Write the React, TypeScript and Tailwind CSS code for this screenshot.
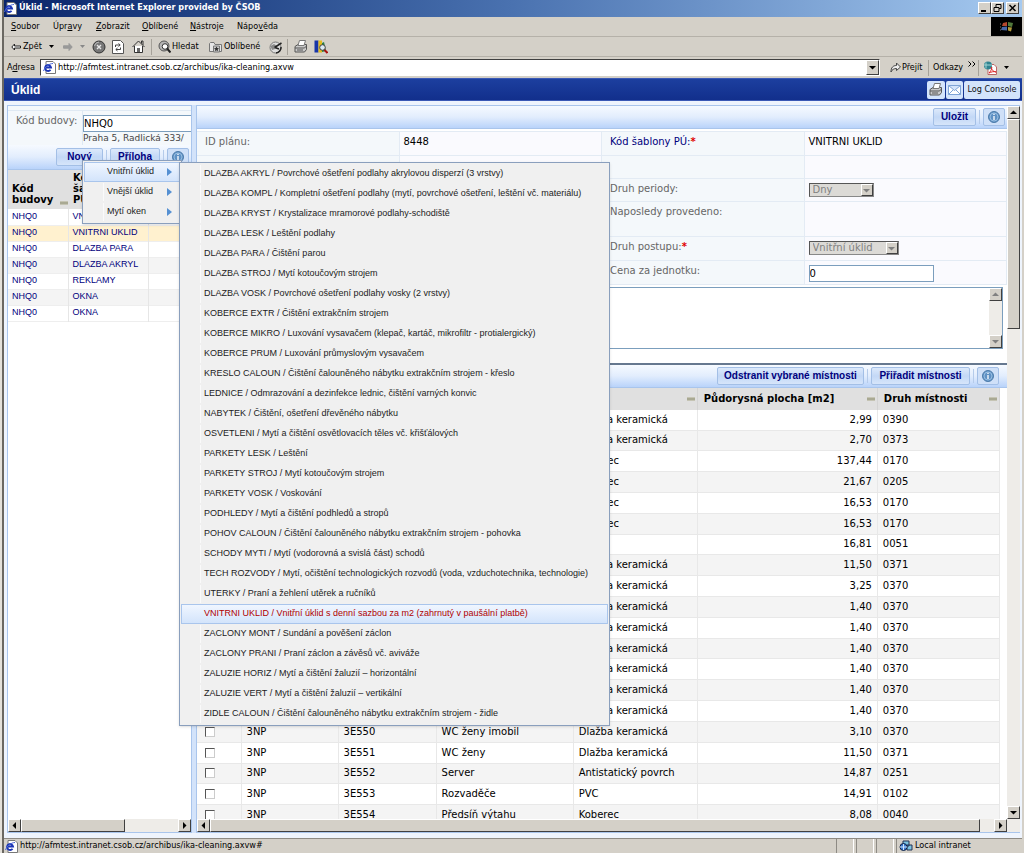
import type { ReactNode } from "react";
import { clsx } from "clsx";

const menuBar = [
  ["", "S", "oubor", "ml-[7px] w-[42px]"],
  ["Úpr", "a", "vy", "w-[43px]"],
  ["", "Z", "obrazit", "w-[46px]"],
  ["", "O", "blíbené", "w-[48px]"],
  ["", "N", "ástroje", "w-[47px]"],
  ["Nápo", "v", "ěda", "w-[48px]"],
];

const plans = ["VNITRNI UKLID", "VNITRNI UKLID", "DLAZBA PARA", "DLAZBA AKRYL", "REKLAMY", "OKNA", "OKNA"];

const groups = ["Vnitřní úklid", "Vnější úklid", "Mytí oken"];

const templates = [
  "DLAZBA AKRYL / Povrchové ošetření podlahy akrylovou disperzí (3 vrstvy)",
  "DLAZBA KOMPL / Kompletní ošetření podlahy (mytí, povrchové ošetření, leštění vč. materiálu)",
  "DLAZBA KRYST / Krystalizace mramorové podlahy-schodiště",
  "DLAZBA LESK / Leštění podlahy",
  "DLAZBA PARA / Čištění parou",
  "DLAZBA STROJ / Mytí kotoučovým strojem",
  "DLAZBA VOSK / Povrchové ošetření podlahy vosky (2 vrstvy)",
  "KOBERCE EXTR / Čištění extrakčním strojem",
  "KOBERCE MIKRO / Luxování vysavačem (klepač, kartáč, mikrofiltr - protialergický)",
  "KOBERCE PRUM / Luxování průmyslovým vysavačem",
  "KRESLO CALOUN / Čištění čalouněného nábytku extrakčním strojem - křeslo",
  "LEDNICE / Odmrazování a dezinfekce lednic, čištění varných konvic",
  "NABYTEK / Čištění, ošetření dřevěného nábytku",
  "OSVETLENI / Mytí a čištění osvětlovacích těles vč. křišťálových",
  "PARKETY LESK / Leštění",
  "PARKETY STROJ / Mytí kotoučovým strojem",
  "PARKETY VOSK / Voskování",
  "PODHLEDY / Mytí a čištění podhledů a stropů",
  "POHOV CALOUN / Čištění čalouněného nábytku extrakčním strojem - pohovka",
  "SCHODY MYTI / Mytí (vodorovná a svislá část) schodů",
  "TECH ROZVODY / Mytí, očištění technologických rozvodů (voda, vzduchotechnika, technologie)",
  "UTERKY / Praní a žehlení utěrek a ručníků",
  "VNITRNI UKLID / Vnitřní úklid s denní sazbou za m2 (zahrnutý v paušální platbě)",
  "ZACLONY MONT / Sundání a pověšení záclon",
  "ZACLONY PRANI / Praní záclon a závěsů vč. aviváže",
  "ZALUZIE HORIZ / Mytí a čištění žaluzií – horizontální",
  "ZALUZIE VERT / Mytí a čištění žaluzií – vertikální",
  "ZIDLE CALOUN / Čištění čalouněného nábytku extrakčním strojem - židle",
];
const selectedTemplate = 22;

// floor, room, name, surface, area, type
const rooms = [
  ["", "", "", "Dlažba keramická", "2,99", "0390"],
  ["", "", "", "Dlažba keramická", "2,70", "0373"],
  ["", "", "", "Koberec", "137,44", "0170"],
  ["", "", "", "Koberec", "21,67", "0205"],
  ["", "", "", "Koberec", "16,53", "0170"],
  ["", "", "", "Koberec", "16,53", "0170"],
  ["", "", "", "", "16,81", "0051"],
  ["", "", "", "Dlažba keramická", "11,50", "0371"],
  ["", "", "", "Dlažba keramická", "3,25", "0370"],
  ["", "", "", "Dlažba keramická", "1,40", "0370"],
  ["", "", "", "Dlažba keramická", "1,40", "0370"],
  ["", "", "", "Dlažba keramická", "1,40", "0370"],
  ["", "", "", "Dlažba keramická", "1,40", "0370"],
  ["", "", "", "Dlažba keramická", "1,40", "0370"],
  ["", "", "", "Dlažba keramická", "1,40", "0370"],
  ["3NP", "3E550", "WC ženy imobil", "Dlažba keramická", "3,10", "0370"],
  ["3NP", "3E551", "WC ženy", "Dlažba keramická", "11,50", "0371"],
  ["3NP", "3E552", "Server", "Antistatický povrch", "14,87", "0251"],
  ["3NP", "3E553", "Rozvaděče", "PVC", "14,91", "0102"],
  ["3NP", "3E554", "Předsíň výtahu", "Koberec", "8,08", "0040"],
];

const raised = "border border-t-white border-l-white border-r-[#404040] border-b-[#404040] bg-[#d4d0c8]";

const IePage = () => (
  <svg width="13" height="13" viewBox="0 0 13 13" className="shrink-0">
    <path d="M3 .5h7l2.500 2.500v9.500H3z" fill="#fff" stroke="#777" />
    <path d="M7.500 8.800A3 3 0 1 1 8 6.500H3" fill="none" stroke="#1c35b5" strokeWidth="1.900" />
    <path d="M.5 10C2 6 6 2.500 10 2.500" fill="none" stroke="#4b67d8" />
  </svg>
);

const Arrow = ({ dir, muted }: { dir: "up" | "down" | "left" | "right"; muted?: boolean }) => {
  const d = { up: "M0 5 3.500 1.500 7 5z", down: "M0 2h7L3.500 5.500z", left: "M5 0v7L1.500 3.500z", right: "M2 0v7l3.500-3.500z" }[dir];
  return (
    <svg width="7" height="7" viewBox="0 0 7 7" className="shrink-0">
      <path d={d} fill={muted ? "#808080" : "#000"} />
    </svg>
  );
};

const ScrollButton = ({ dir, muted }: { dir: "up" | "down" | "left" | "right"; muted?: boolean }) => (
  <button aria-label={`Scroll ${dir}`} className={clsx("flex size-[13px] shrink-0 items-center justify-center", raised)}>
    <Arrow dir={dir} muted={muted} />
  </button>
);

const InfoButton = () => (
  <button aria-label="Info" className="flex h-[18px] w-[22px] items-center justify-center rounded-xs border border-[#a3bfe6] bg-[#cfe0f8]">
    <svg width="14" height="14" viewBox="0 0 14 14">
      <circle cx="7" cy="7" r="5.500" fill="#5f91c4" stroke="#4d7cab" />
      <circle cx="7" cy="7" r="4" fill="none" stroke="#a5c8e8" strokeWidth=".8" />
      <path d="M7 6v4M7 3.700v1.300" stroke="#fff" strokeWidth="1.300" />
    </svg>
  </button>
);

const ToolButton = ({ children, className }: { children: ReactNode; className: string }) => (
  <button
    className={clsx(
      "h-[18px] shrink-0 rounded-xs border border-[#a3bfe6] bg-linear-to-b from-[#dce9fb] via-[#c3d8f6] to-[#d6e5fa] font-['Liberation_Sans',sans-serif] text-[10px] leading-4 font-bold whitespace-nowrap text-[#00007d]",
      className,
    )}
  >
    {children}
  </button>
);

const toolbar = "flex shrink-0 items-center justify-end border-b border-[#a9c5ec] bg-linear-to-b from-[#f6faff] via-[#e2edfd] to-[#b9d3fa]";

const ToolSplit = () => <span className="h-[14px] w-px shrink-0 bg-[#b5cbea]" />;

const Grip = () => <span className="h-[4px] w-[8px] shrink-0 border-y border-[#c5c4b4] bg-[#a9a993]" />;

const Divider = () => <span className="h-[16px] w-px shrink-0 border-l border-[#a6a29a] bg-white" />;

const TitleBar = () => (
  <header className="flex h-[17px] shrink-0 items-center bg-linear-to-r from-[#0a246a] via-[#4a72b0] via-50% to-[#a6caf0] pr-[3px] pb-px text-white">
    <IePage />
    <h1 className="ml-[2px] flex-1 text-[9px] font-bold whitespace-nowrap">Úklid - Microsoft Internet Explorer provided by ČSOB</h1>
    <button aria-label="Minimize" className={clsx("h-[12px] w-[13px]", raised)}>
      <svg viewBox="0 0 11 10"><path d="M2 8h5" stroke="#000" strokeWidth="2" /></svg>
    </button>
    <button aria-label="Restore" className={clsx("h-[12px] w-[13px]", raised)}>
      <svg viewBox="0 0 11 10"><path d="M4 4V1.500h5v4H7M2 4.500h5v4H2z" fill="none" stroke="#000" /></svg>
    </button>
    <button aria-label="Close" className={clsx("ml-[2px] h-[12px] w-[13px]", raised)}>
      <svg viewBox="0 0 11 10"><path d="m2.500 2 6 6m0-6-6 6" stroke="#000" strokeWidth="1.500" /></svg>
    </button>
  </header>
);

const MenuBar = () => (
  <nav className="flex h-[20px] shrink-0 items-stretch border-b border-[#b5b1a9]">
    <div className="flex flex-1 items-center">
      {menuBar.map(([before, key, after, width]) => (
        <button key={before + key} className={clsx("text-left", width)}>
          {before}
          <u>{key}</u>
          {after}
        </button>
      ))}
    </div>
    <div className="flex w-[31px] items-center justify-center bg-black">
      <svg width="14" height="12" viewBox="0 0 14 12">
        <path d="m3 2 4-1v4H2z" fill="#b5482e" />
        <path d="m8 1 5 1-1 4-4-1z" fill="#527a3c" />
        <path d="m2 6 5-.5v4L1 9z" fill="#4767a8" />
        <path d="m8 6 4 .5-1 4-3-1z" fill="#b19a3a" />
        <path d="M0 3h1M0 6h1M0 9h1" stroke="#777" />
      </svg>
    </div>
  </nav>
);

const Toolbar = () => (
  <div className="flex h-[20px] shrink-0 items-center border-b border-[#b5b1a9] pl-[7px]">
    <button className="flex w-[36px] items-center gap-[2px]">
      <svg width="10" height="8" viewBox="0 0 10 8"><path d="M3.500 1 .800 4l2.700 3V5h6V3h-6z" fill="#fff" stroke="#222" /></svg>
      Zpět
    </button>
    <svg width="5" height="3" className="ml-[2px]"><path d="M0 0h5L2.500 3z" /></svg>
    <svg width="10" height="8" viewBox="0 0 10 8" className="ml-[9px]"><path d="M6 .5 9.200 4 6 7.500V5.200H.5V2.800H6z" fill="#999" stroke="#999" /></svg>
    <svg width="5" height="3" className="ml-[7px]"><path d="M0 0h5L2.500 3z" fill="#888" /></svg>
    <button aria-label="Stop" className="ml-[7px]">
      <svg width="14" height="14" viewBox="0 0 14 14">
        <circle cx="7" cy="7" r="6" fill="#777" stroke="#333" />
        <path d="M2.500 6A5 5 0 0 1 7 2" fill="none" stroke="#bbb" />
        <path d="m5 5 4 4m0-4-4 4" stroke="#e8e8e8" strokeWidth="1.400" />
      </svg>
    </button>
    <button aria-label="Refresh" className="ml-[6px]">
      <svg width="12" height="14" viewBox="0 0 12 14">
        <path d="M.5.5h8l3 3v10H.5z" fill="#fff" stroke="#555" />
        <path d="M3.500 7V5H8M6.500 3.500 8.200 5 6.500 6.500M8.500 7.500v2H4m1.500-1.500L3.800 9.500 5.500 11" fill="none" stroke="#444" />
      </svg>
    </button>
    <button aria-label="Home" className="ml-[8px]">
      <svg width="13" height="13" viewBox="0 0 13 13">
        <path d="M2.500 6v6.500h8V6" fill="#fff" stroke="#333" />
        <path d="m.5 7 6-6 6 6M9.500 3.500V1h1.500v4" fill="none" stroke="#333" />
        <path d="M5 8h3v4H5z" fill="#666" />
      </svg>
    </button>
    <span className="ml-[6px] flex"><Divider /></span>
    <button className="ml-[6px] flex w-[50px] items-center gap-px">
      <svg width="13" height="13" viewBox="0 0 13 13" className="shrink-0">
        <circle cx="6" cy="6" r="5" fill="#b5b5b5" stroke="#555" />
        <circle cx="7" cy="6.500" r="2.800" fill="#fff" stroke="#333" />
        <path d="m9 8.500 3.500 4" stroke="#222" strokeWidth="2" />
      </svg>
      Hledat
    </button>
    <button className="ml-px flex w-[56px] items-center gap-[2px]">
      <svg width="13" height="12" viewBox="0 0 13 12" className="shrink-0">
        <path d="M.5 2.500v8h12v-7H6L5 1.500H1.500z" fill="#e6e6e6" stroke="#777" />
        <path d="M4.500 5h6v6h-6z" fill="#ccc" stroke="#777" />
        <path d="m7.500 5.500.8 1.500 1.700.2-1.300 1.200.3 1.800-1.500-.9-1.500.9.3-1.800L5 7.200 6.700 7z" fill="#333" />
      </svg>
      Oblíbené
    </button>
    <button aria-label="History" className="ml-[4px]">
      <svg width="14" height="14" viewBox="0 0 14 14">
        <circle cx="6.500" cy="7.500" r="5.500" fill="#ddd" stroke="#777" />
        <path d="M1.500 6 5 4l3 2-2 3-3 1z" fill="#888" />
        <path d="M12 7a5.500 5.500 0 0 1-5 6" fill="none" stroke="#222" strokeWidth="1.500" />
        <path d="M5.500 7.500 12.500 3M6 7.500l4 1.500" stroke="#222" strokeWidth="1.500" />
      </svg>
    </button>
    <span className="ml-[4px] flex"><Divider /></span>
    <button aria-label="Print" className="ml-[6px]"><Printer /></button>
    <button aria-label="Research" className="ml-[6px]">
      <svg width="14" height="14" viewBox="0 0 14 14">
        <path d="M.5.5h4v12h-4z" fill="#1835a8" />
        <path d="M4.500.5h3.500v12H4.500z" fill="#e3bc1d" />
        <path d="m8 3 2-1 2 9-4 1z" fill="#268045" />
        <circle cx="8.500" cy="7.500" r="2.800" fill="#dceaf3" stroke="#444" />
        <path d="m10.500 10 3 3" stroke="#a11" strokeWidth="2" />
      </svg>
    </button>
  </div>
);

function Printer() {
  return (
    <svg width="14" height="13" viewBox="0 0 14 13">
      <path d="M1 6.500 4 4.500h8.500v5L10.500 12H1z" fill="#c9c9c9" stroke="#555" />
      <path d="m4 5.500 1.500-5h6l-1.500 5z" fill="#fff" stroke="#777" />
      <path d="M1 8h9.500L12.500 6M3 10h6" fill="none" stroke="#555" />
    </svg>
  );
}

const AddressBar = () => (
  <div className="flex h-[21px] shrink-0 items-center pl-[3px]">
    <label htmlFor="url" className="w-[33px]">A<u>d</u>resa</label>
    <div className="flex h-[17px] flex-1 items-center border border-t-[#404040] border-r-white border-b-white border-l-[#404040] bg-white pl-[2px]">
      <IePage />
      <input id="url" defaultValue="http://afmtest.intranet.csob.cz/archibus/ika-cleaning.axvw" className="ml-[2px] min-w-0 flex-1 outline-none" />
      <button aria-label="History list" className={clsx("flex h-[15px] w-[13px] items-center justify-center", raised)}>
        <Arrow dir="down" />
      </button>
    </div>
    <button className="ml-[10px] flex w-[38px] items-center gap-px">
      <svg width="11" height="11" viewBox="0 0 11 11" className="shrink-0">
        <path d="M1 10C1 5.500 3 3.500 6.500 3.500V1L10.500 5 6.500 8.500V6.500C4 6.500 2 7.500 1 10z" fill="#eee" stroke="#444" />
      </svg>
      Přejít
    </button>
    <Divider />
    <button className="ml-[4px] flex w-[43px] items-center justify-between">
      Odkazy
      <svg width="8" height="7" viewBox="0 0 8 7" className="mb-[6px]"><path d="m.5.5 2.500 2.500L.5 5.500m4-5L7 3 4.500 5.500" fill="none" stroke="#000" /></svg>
    </button>
    <span className="ml-[2px] flex"><Divider /></span>
    <button aria-label="PDF" className="mr-[13px] ml-[4px] flex items-center gap-[7px]">
      <svg width="14" height="14" viewBox="0 0 14 14">
        <path d="M5 3.500h6l2.500 2.500v7.500H5z" fill="#fff" stroke="#b66" />
        <circle cx="5" cy="4.500" r="4" fill="#2f8390" />
        <path d="M1 4h8M3 1.500v6" stroke="#a4d5d5" />
        <path d="M6 12c3-3 3-6 2.500-6S8 10 13 11c-2-1-5 0-7 1z" fill="none" stroke="#d22" />
      </svg>
      <svg width="5" height="3"><path d="M0 0h5L2.500 3z" /></svg>
    </button>
  </div>
);

const PageHeader = () => (
  <div className="flex h-[23px] shrink-0 items-center border-y border-[#3a59b5] bg-linear-to-b from-[#1c3f9f] to-[#122f8c] pr-[2px] pl-[7px] text-white">
    <h2 className="flex-1 font-['Liberation_Sans',sans-serif] text-[12px] font-bold">Úklid</h2>
    <div className="flex gap-px">
      <button aria-label="Print" className="flex h-[18px] w-[18px] items-center justify-center rounded-xs bg-[#d4e4fb]"><Printer /></button>
      <button aria-label="Mail" className="flex h-[18px] w-[17px] items-center justify-center rounded-xs bg-[#d4e4fb]">
        <svg width="13" height="10" viewBox="0 0 13 10"><path d="M.5.5h12v9H.5zl6 5 6-5M.5 9.500 5 5m7.500 4.500L8 5" fill="#fff" stroke="#7ea4d6" /></svg>
      </button>
      <button className="h-[18px] w-[56px] rounded-xs bg-[#d4e4fb] whitespace-nowrap text-[#111]">Log Console</button>
    </div>
  </div>
);

const BuildingPanel = () => (
  <aside className="flex w-[185px] shrink-0 flex-col overflow-hidden border border-[#a9c5ec] bg-white">
    <div className="flex h-[39px] shrink-0 bg-[#f4f8fb] pt-[4px]">
      <label htmlFor="building" className="w-[75px] border-t border-r border-[#dfe9f3] pt-[2px] pl-[8px] font-['DejaVu_Sans',sans-serif] text-[10px] text-[#666]">
        Kód budovy:
      </label>
      <div className="flex-1 overflow-hidden border-t border-[#dfe9f3] pt-[4px]">
        <input id="building" defaultValue="NHQ0" className="block h-[17px] w-[130px] border border-[#7b9ebd] bg-white font-['DejaVu_Sans',sans-serif] text-[10px]" />
        <p className="font-['DejaVu_Sans',sans-serif] text-[9px] leading-[13px] whitespace-nowrap text-[#444]">Praha 5, Radlická 333/</p>
      </div>
    </div>
    <div className={clsx("h-[25px] gap-[3px] pr-[2px]", toolbar)}>
      <ToolButton className="w-[47px]">Nový</ToolButton>
      <ToolSplit />
      <ToolButton className="w-[50px]">Příloha</ToolButton>
      <ToolSplit />
      <InfoButton />
    </div>
    <table className="w-full table-fixed border-collapse text-left font-['Liberation_Sans',sans-serif] text-[9px] text-[#00007d]">
      <thead className="h-[39px] bg-[#e0e0e0] align-bottom font-['DejaVu_Sans',sans-serif] text-[10px] leading-[11px] text-black">
        <tr>
          <th className="w-[60px] pb-[4px] pl-[4px]">
            <span className="flex items-end justify-between">Kód<br />budovy <Grip /></span>
          </th>
          <th className="w-[80px] pb-[4px] pl-[5px]">Kód<br />šablony<br />PÚ</th>
          <th />
        </tr>
      </thead>
      <tbody>
        {plans.map((plan, i) => (
          <tr key={i} className={clsx("h-[16px] border-b border-[#eee]", i === 1 ? "bg-[#fff1cf]" : i % 2 ? "bg-[#f4f4f4]" : "bg-white")}>
            <td className="border-r border-[#e6e6e6] pl-[4px]"><a href="#">NHQ0</a></td>
            <td className="border-r border-[#e6e6e6] pl-[4px]"><a href="#">{plan}</a></td>
            <td />
          </tr>
        ))}
      </tbody>
    </table>
    <div className="mt-auto flex bg-[#eeece8]">
      <ScrollButton dir="left" />
      <div className={clsx("w-[104px]", raised)} />
      <span className="flex-1" />
      <ScrollButton dir="right" />
    </div>
  </aside>
);

const labelCell = "w-1/4 border-r border-b border-[#e3ebf4] bg-[#f4f8fb] px-[8px] pt-[4px] align-top font-normal";
const valueCell = "w-1/4 border-r border-b border-[#e3ebf4] bg-[#fafafe] px-[4px] pt-[4px] align-top";

const Required = () => <span className="font-bold text-[#e00000]">*</span>;

const DisabledSelect = ({ id, value, width }: { id: string; value: string; width: string }) => (
  <span className={clsx("flex h-[14px] border border-t-[#555] border-r-[#888] border-b-[#888] border-l-[#555] bg-[#dcdad6]", width)}>
    <select id={id} disabled className="min-w-0 flex-1 appearance-none pl-[3px] leading-3 text-[#808080]">
      <option>{value}</option>
    </select>
    <span className={clsx("flex w-[12px] items-center justify-center", raised)}><Arrow dir="down" muted /></span>
  </span>
);

const PlanForm = () => (
  <form className="shrink-0 font-['DejaVu_Sans',sans-serif] text-[10px] leading-3 text-[#666]">
    <div className={clsx("h-[23px] gap-[3px] pr-[2px]", toolbar)}>
      <ToolButton className="w-[43px]">Uložit</ToolButton>
      <ToolSplit />
      <InfoButton />
    </div>
    <table className="mt-[2px] w-full table-fixed border-separate border-spacing-0 border-t border-[#e3ebf4] text-left">
      <tbody>
        <tr className="h-[24px]">
          <th className={labelCell}>ID plánu:</th>
          <td className={clsx(valueCell, "text-black")}>8448</td>
          <th className={clsx(labelCell, "text-[#00007d]")}>Kód šablony PÚ:<Required /></th>
          <td className={clsx(valueCell, "text-black")}>VNITRNI UKLID</td>
        </tr>
        <tr className="h-[23px]">
          <th className={labelCell} /><td className={valueCell} /><th className={labelCell} /><td className={valueCell} />
        </tr>
        <tr className="h-[23px]">
          <th className={labelCell} /><td className={valueCell} />
          <th className={labelCell}><label htmlFor="period">Druh periody:</label></th>
          <td className={valueCell}><DisabledSelect id="period" value="Dny" width="w-[65px]" /></td>
        </tr>
        <tr className="h-[35px]">
          <th className={labelCell} /><td className={valueCell} />
          <th className={labelCell}>Naposledy provedeno:</th>
          <td className={valueCell} />
        </tr>
        <tr className="h-[24px]">
          <th className={labelCell} /><td className={valueCell} />
          <th className={labelCell}><label htmlFor="procedure">Druh postupu:<Required /></label></th>
          <td className={valueCell}><DisabledSelect id="procedure" value="Vnitřní úklid" width="w-[90px]" /></td>
        </tr>
        <tr className="h-[24px]">
          <th className={labelCell} /><td className={valueCell} />
          <th className={labelCell}><label htmlFor="price">Cena za jednotku:</label></th>
          <td className={valueCell}>
            <input id="price" defaultValue="0" className="block h-[17px] w-[125px] border border-[#7b9ebd] bg-white text-black" />
          </td>
        </tr>
      </tbody>
    </table>
    <div className="mt-[2px] mr-[4px] ml-[206px] flex h-[62px] border border-[#7b9ebd] bg-white">
      <textarea aria-label="Popis" className="flex-1 resize-none outline-none" />
      <div className="flex flex-col justify-between bg-[#eeece8]">
        <ScrollButton dir="up" muted />
        <ScrollButton dir="down" muted />
      </div>
    </div>
  </form>
);

const roomHeads = ["", "", "", "", "", "Půdorysná plocha [m2]", "Druh místnosti"];
const roomWidths = ["w-[44px]", "w-[97px]", "w-[98px]", "w-[137px]", "w-[124px]", "w-[180px]", "w-[122px]"];

const RoomGrid = () => (
  <section className="flex min-h-0 flex-1 flex-col border-t-2 border-[#66788f]">
    <div className={clsx("h-[23px] gap-[3px] pr-[8px]", toolbar)}>
      <ToolButton className="w-[147px]">Odstranit vybrané místnosti</ToolButton>
      <ToolSplit />
      <ToolButton className="w-[99px]">Přiřadit místnosti</ToolButton>
      <ToolSplit />
      <InfoButton />
    </div>
    <div className="min-h-0 flex-1 overflow-hidden pr-[7px]">
      <table className="h-[438px] w-full table-fixed border-collapse text-left font-['DejaVu_Sans',sans-serif] text-[10px] leading-3 text-black">
        <thead className="h-[22px] bg-[#e0e0e0]">
          <tr>
            {roomHeads.map((head, i) => (
              <th key={i} className={clsx("border-r border-[#d4d4d4] px-[2px] pl-[6px]", roomWidths[i])}>
                <span className="flex items-center justify-between whitespace-nowrap">{head || <i />}<Grip /></span>
              </th>
            ))}
          </tr>
        </thead>
        <tbody>
          {rooms.map((room, i) => (
            <tr key={i} className={clsx("border-b border-[#e8e8e8]", i % 2 ? "bg-[#f4f4f4]" : "bg-white")}>
              <td className="border-r border-[#e8e8e8] pl-[8px]">
                <input type="checkbox" aria-label={`Room ${room[1]}`} className="block size-[10px] appearance-none border border-t-[#555] border-r-[#ccc] border-b-[#ccc] border-l-[#555] bg-white" />
              </td>
              {room.map((cell, j) => (
                <td key={j} className={clsx("border-r border-[#e8e8e8] px-[5px] whitespace-nowrap", j === 4 && "text-right")}>{cell}</td>
              ))}
            </tr>
          ))}
        </tbody>
      </table>
    </div>
  </section>
);

const popup = "absolute border border-[#8a9fbd] bg-[#f0f0f0] p-px font-['Liberation_Sans',sans-serif] text-[9px] text-[#222] shadow-sm";
const hot = "border-[#a9c5ec] bg-linear-to-b from-[#f0f6ff] to-[#d3e4fb]";

// icon column on the left of every menu item
const Gutter = ({ hidden }: { hidden?: boolean }) => (
  <span className={clsx("w-[19px] shrink-0 self-stretch border-r", hidden ? "border-transparent" : "border-[#fafafa]")} />
);

const PopupMenus = () => (
  <>
    <ul className={clsx("top-[59px] left-[78px] w-[100px]", popup)}>
      {groups.map((group, i) => (
        <li key={group}>
          <button className={clsx("flex h-[20px] w-full items-center gap-[3px] border pr-[7px]", i === 0 ? hot : "border-transparent")}>
            <Gutter hidden={i === 0} />
            <span className="flex-1 text-left whitespace-nowrap">{group}</span>
            <svg width="5" height="8" className="shrink-0"><path d="M0 0v8l5-4z" fill="#5590d2" /></svg>
          </button>
        </li>
      ))}
    </ul>
    <ul className={clsx("top-[61px] left-[175px] w-[431px]", popup)}>
      {templates.map((template, i) => (
        <li key={template}>
          <button
            className={clsx(
              "flex h-[20px] w-full items-center gap-[3px] border whitespace-nowrap",
              i === selectedTemplate ? clsx(hot, "text-[#b00000]") : "border-transparent",
            )}
          >
            <Gutter hidden={i === selectedTemplate} />
            {template}
          </button>
        </li>
      ))}
    </ul>
  </>
);

const StatusBar = () => (
  <footer className="flex h-[15px] shrink-0 items-center gap-[2px] border-t border-[#8d8a84]">
    <div className="flex flex-1 items-center gap-[2px] pl-px"><IePage />http://afmtest.intranet.csob.cz/archibus/ika-cleaning.axvw#</div>
    <span className="h-[14px] w-[18px] border-x border-r-white border-l-[#8d8a84]" />
    <span className="h-[14px] w-[18px] border-x border-r-white border-l-[#8d8a84]" />
    <span className="h-[14px] w-[18px] border-x border-r-white border-l-[#8d8a84]" />
    <div className="flex h-[14px] w-[126px] items-center gap-[2px] border-l border-[#8d8a84] pl-[2px]">
      <svg width="14" height="12" viewBox="0 0 14 12">
        <path d="M4 1h6v5H4zM8 5h5v5H8z" fill="#7cc4e0" stroke="#235" />
        <circle cx="4.500" cy="7" r="3.500" fill="#3a7ad0" stroke="#124" />
        <path d="M1 7h7M4.500 4v6" stroke="#cfe6ff" />
      </svg>
      Local intranet
    </div>
  </footer>
);

export default function App() {
  return (
    <div className="h-screen overflow-hidden border-l-2 border-[#e4e1da] bg-[#d4d0c8] font-['DejaVu_Sans_Condensed','DejaVu_Sans',sans-serif] text-[9px] text-black">
      <div className="flex h-full flex-col border-r-2 border-l-2 border-r-[#d4d0c8] border-l-[#6b6862]">
        <TitleBar />
        <MenuBar />
        <Toolbar />
        <AddressBar />
        <PageHeader />
        <main className="relative flex min-h-0 flex-1 bg-[#eef4fd] pt-[4px] pr-[2px] pb-[5px] pl-[3px]">
          <BuildingPanel />
          <div className="w-[4px] shrink-0 bg-[#d3e3fa]" />
          <div className="flex min-w-0 flex-1 flex-col border border-r-0 border-[#a9c5ec] bg-white">
            <div className="flex min-h-0 flex-1">
              <div className="flex min-w-0 flex-1 flex-col gap-[14px]">
                <PlanForm />
                <RoomGrid />
              </div>
              <div className="flex flex-col bg-[#eeece8]">
                <ScrollButton dir="up" />
                <div className={clsx("h-[210px]", raised)} />
                <span className="flex-1" />
                <ScrollButton dir="down" />
              </div>
            </div>
            <div className="flex bg-[#eeece8] pr-[13px]">
              <ScrollButton dir="left" />
              <div className={clsx("flex-1", raised)} />
              <span className="w-[14px]" />
              <ScrollButton dir="right" />
            </div>
          </div>
          <PopupMenus />
        </main>
        <StatusBar />
      </div>
    </div>
  );
}
